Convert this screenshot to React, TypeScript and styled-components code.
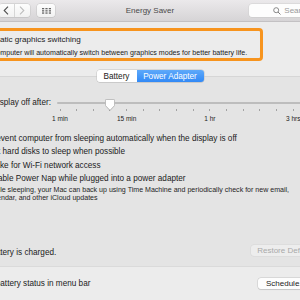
import React from "react";
import styled, { createGlobalStyle } from "styled-components";

const GlobalStyle = createGlobalStyle`
  html, body { margin: 0; padding: 0; background: #ececec; }
  body {
    width: 300px; height: 300px; overflow: hidden;
    font-family: "Liberation Sans", Arial, sans-serif;
    color: #1b1b1b;
  }
  #root { width: 300px; height: 300px; overflow: hidden; }
`;

const Viewport = styled.div`
  width: 300px;
  height: 300px;
  overflow: hidden;
`;

const Window = styled.div`
  width: 400px;
  height: 300px;
  margin-left: -50px;
  background: #ececec;
  display: flex;
  flex-direction: column;
`;

const Toolbar = styled.header`
  height: 21px;
  flex: none;
  border-bottom: 1px solid #c3c1c3;
  background: linear-gradient(#ebe9eb, #d6d4d6);
  display: grid;
  grid-template-columns: 1fr auto 1fr;
  align-items: center;
`;

const LeftTools = styled.div`
  display: flex;
  align-items: center;
  gap: 7px;
  padding-left: 49px;
`;

const NavSegment = styled.div`
  display: flex;
  height: 13px;
  border-radius: 3px;
  background: linear-gradient(#fdfdfd, #f2f2f2);
  box-shadow: 0 0 0 0.5px #c4c4c4, 0 0.5px 0.5px rgba(0, 0, 0, 0.12);
  overflow: hidden;
`;

const NavButton = styled.div<{ $divider?: boolean }>`
  width: 15.5px;
  height: 13px;
  display: flex;
  align-items: center;
  justify-content: center;
  border-right: ${(p) => (p.$divider ? "1px solid #d6d6d6" : "none")};
  box-sizing: border-box;
`;

const ToolButton = styled.div`
  width: 18px;
  height: 13px;
  border-radius: 3px;
  background: linear-gradient(#fdfdfd, #f2f2f2);
  box-shadow: 0 0 0 0.5px #c4c4c4, 0 0.5px 0.5px rgba(0, 0, 0, 0.12);
  display: flex;
  align-items: center;
  justify-content: center;
`;

const Title = styled.div`
  font-size: 8px;
  color: #4a4a4a;
  line-height: 21px;
  white-space: nowrap;
`;

const SearchField = styled.div`
  justify-self: end;
  margin-right: 16px;
  width: 85px;
  height: 13px;
  border-radius: 3px;
  background: #fdfdfd;
  box-shadow: 0 0 0 0.5px #cfcfcf, 0 0.5px 0.5px rgba(0, 0, 0, 0.08);
  display: flex;
  align-items: center;
  justify-content: center;
  gap: 3px;
  font-size: 8px;
  color: #9a9a9a;
`;

const Content = styled.main`
  flex: 1;
  display: flex;
  flex-direction: column;
  padding-top: 6px;
`;

const Callout = styled.section`
  width: 313px;
  height: 33px;
  box-sizing: border-box;
  border: 3px solid #f7941e;
  border-radius: 4px;
  padding: 3px 0 0 23.5px;
  display: flex;
  flex-direction: column;
`;

const CalloutTitle = styled.div`
  font-size: 8.1px;
  line-height: 12px;
  white-space: nowrap;
`;

const CalloutDesc = styled.div`
  font-size: 7.1px;
  line-height: 10px;
  margin-top: 2px;
  white-space: nowrap;
`;

const Panel = styled.section`
  margin-top: 15px;
  height: 191px;
  box-sizing: border-box;
  border-top: 1px solid #d6d6d6;
  border-bottom: 1px solid #dadada;
  background: #e4e4e4;
  display: flex;
  flex-direction: column;
  padding-bottom: 8px;
`;

const Segmented = styled.div`
  align-self: center;
  margin-top: -7px;
  height: 12px;
  box-sizing: border-box;
  display: flex;
  border-radius: 3px;
  overflow: hidden;
  box-shadow: 0 0 0 0.5px #c2c2c2, 0 0.5px 0.5px rgba(0, 0, 0, 0.15);
`;

const Segment = styled.div<{ $active?: boolean; $w: number }>`
  width: ${(p) => p.$w}px;
  height: 12px;
  display: flex;
  align-items: center;
  justify-content: center;
  font-size: 8.2px;
  white-space: nowrap;
  color: ${(p) => (p.$active ? "#ffffff" : "#1b1b1b")};
  background: ${(p) =>
    p.$active ? "linear-gradient(#5ea9fa, #3189f6)" : "#ffffff"};
`;

const SliderRow = styled.div`
  margin-top: 14px;
  display: flex;
  align-items: flex-start;
  padding-left: 24.5px;
`;

const SliderLabel = styled.div`
  width: 77.2px;
  flex: none;
  font-size: 8.2px;
  line-height: 14px;
  white-space: nowrap;
`;

const SliderBox = styled.div`
  position: relative;
  flex: 1;
  height: 27px;
  display: flex;
  flex-direction: column;
`;

const Track = styled.div`
  margin-top: 6px;
  margin-left: 5.3px;
  height: 2px;
  border-radius: 1px;
  background: #bdbdbd;
`;

const Ticks = styled.div`
  margin-top: 5px;
  display: flex;
  height: 2px;
`;

const TickCell = styled.div`
  width: 16.667px;
  flex: none;
  display: flex;
  justify-content: center;
  &::after {
    content: "";
    width: 1px;
    height: 2px;
    background: #a3a3a3;
  }
`;

const ScaleLabels = styled.div`
  margin-top: 3px;
  display: flex;
`;

const ScaleLabel = styled.div`
  width: 16.667px;
  flex: none;
  display: flex;
  justify-content: center;
  white-space: nowrap;
  font-size: 6.5px;
  line-height: 9px;
  color: #222;
`;

const Thumb = styled.div`
  position: absolute;
  top: 1px;
  width: 10px;
  height: 12px;
  filter: drop-shadow(0 0.5px 0.6px rgba(0, 0, 0, 0.3));
`;

const CheckList = styled.div`
  margin-top: 8.2px;
  display: flex;
  flex-direction: column;
`;

const CheckRow = styled.label<{ $indent: number }>`
  height: 13.67px;
  display: flex;
  align-items: center;
  gap: 4px;
  padding-left: ${(p) => p.$indent}px;
  font-size: 8.2px;
  white-space: nowrap;
`;

const Box = styled.span`
  width: 10px;
  height: 10px;
  flex: none;
  box-sizing: border-box;
  border-radius: 2px;
  background: #fff;
  border: 1px solid #b5b5b5;
`;

const Desc = styled.div`
  padding-left: 38px;
  font-size: 7.07px;
  line-height: 8.5px;
  white-space: nowrap;
  color: #1f1f1f;
`;

const PanelFooter = styled.div`
  margin-top: auto;
  display: flex;
  align-items: flex-start;
  padding: 0 27px 0 38px;
`;

const Status = styled.div`
  margin-top: 3px;
  font-size: 8.2px;
  line-height: 10px;
  white-space: nowrap;
`;

const PushButton = styled.div<{ $disabled?: boolean; $w: number }>`
  margin-left: auto;
  width: ${(p) => p.$w}px;
  height: 11px;
  border-radius: 3px;
  display: flex;
  align-items: center;
  justify-content: center;
  font-size: 8px;
  white-space: nowrap;
  color: ${(p) => (p.$disabled ? "#a9a9a9" : "#1b1b1b")};
  background: ${(p) => (p.$disabled ? "#ededed" : "#fdfdfd")};
  box-shadow: ${(p) =>
    p.$disabled
      ? "0 0 0 0.5px #d5d5d5"
      : "0 0 0 0.5px #c6c6c6, 0 0.5px 0.8px rgba(0,0,0,0.15)"};
`;

const BottomRow = styled.div`
  margin-top: 11px;
  height: 11px;
  display: flex;
  align-items: center;
  padding: 0 36px 0 9px;
`;

const BottomLabel = styled.label`
  display: flex;
  align-items: center;
  gap: 4px;
  font-size: 8.2px;
  white-space: nowrap;
`;

const TICK_COUNT = 18;
const CELL = 16.667;
const SCALE: Record<number, string> = { 0: "1 min", 4: "15 min", 9: "1 hr", 14: "3 hrs" };
const THUMB_INDEX = 3;

const ChevronLeft = ({ color }: { color: string }) => (
  <svg width="6" height="9" viewBox="0 0 6 9">
    <polyline points="5,0.6 1.2,4.5 5,8.4" fill="none" stroke={color} strokeWidth="1.1" />
  </svg>
);

const ChevronRight = ({ color }: { color: string }) => (
  <svg width="6" height="9" viewBox="0 0 6 9">
    <polyline points="1,0.6 4.8,4.5 1,8.4" fill="none" stroke={color} strokeWidth="1.1" />
  </svg>
);

const GridIcon = () => (
  <svg width="9" height="6" viewBox="0 0 9 6">
    {[0, 1, 2].map((r) =>
      [0, 1, 2].map((c) => (
        <rect key={`${r}-${c}`} x={c * 3.4} y={r * 2.2} width="2.2" height="1.3" fill="#666" />
      ))
    )}
  </svg>
);

const SearchIcon = () => (
  <svg width="8" height="8" viewBox="0 0 8 8">
    <circle cx="3.2" cy="3.2" r="2.5" fill="none" stroke="#7d7d7d" strokeWidth="0.9" />
    <line x1="5" y1="5" x2="7.5" y2="7.5" stroke="#7d7d7d" strokeWidth="1" />
  </svg>
);

const ThumbShape = () => (
  <svg width="10" height="12" viewBox="0 0 10 12">
    <path
      d="M1.5 0.5 H8.5 Q9.5 0.5 9.5 1.5 V6.6 L5 11.3 L0.5 6.6 V1.5 Q0.5 0.5 1.5 0.5 Z"
      fill="#ffffff"
      stroke="#b8b8b8"
      strokeWidth="0.7"
    />
  </svg>
);

export default function App() {
  const cells = Array.from({ length: TICK_COUNT }, (_, i) => i);
  return (
    <Viewport>
      <GlobalStyle />
      <Window>
        <Toolbar>
          <LeftTools>
            <NavSegment>
              <NavButton $divider>
                <ChevronLeft color="#505050" />
              </NavButton>
              <NavButton>
                <ChevronRight color="#bdbdbd" />
              </NavButton>
            </NavSegment>
            <ToolButton>
              <GridIcon />
            </ToolButton>
          </LeftTools>
          <Title>Energy Saver</Title>
          <SearchField>
            <SearchIcon />
            <span>Search</span>
          </SearchField>
        </Toolbar>
        <Content>
          <Callout>
            <CalloutTitle>Automatic graphics switching</CalloutTitle>
            <CalloutDesc>
              Your computer will automatically switch between graphics modes for better battery life.
            </CalloutDesc>
          </Callout>
          <Panel>
            <Segmented>
              <Segment $w={40}>Battery</Segment>
              <Segment $w={67} $active>
                Power Adapter
              </Segment>
            </Segmented>
            <SliderRow>
              <SliderLabel>Turn display off after:</SliderLabel>
              <SliderBox>
                <Track />
                <Ticks>
                  {cells.map((i) => (
                    <TickCell key={i} />
                  ))}
                </Ticks>
                <ScaleLabels>
                  {cells.map((i) => (
                    <ScaleLabel key={i}>{SCALE[i] ?? ""}</ScaleLabel>
                  ))}
                </ScaleLabels>
                <Thumb style={{ left: THUMB_INDEX * CELL + CELL / 2 - 5 }}>
                  <ThumbShape />
                </Thumb>
              </SliderBox>
            </SliderRow>
            <CheckList>
              <CheckRow $indent={24}>
                <Box />
                Prevent computer from sleeping automatically when the display is off
              </CheckRow>
              <CheckRow $indent={24}>
                <Box />
                Put hard disks to sleep when possible
              </CheckRow>
              <CheckRow $indent={24}>
                <Box />
                Wake for Wi-Fi network access
              </CheckRow>
              <CheckRow $indent={24}>
                <Box />
                Enable Power Nap while plugged into a power adapter
              </CheckRow>
              <Desc>
                While sleeping, your Mac can back up using Time Machine and periodically check for new email,
                <br />
                calendar, and other iCloud updates
              </Desc>
            </CheckList>
            <PanelFooter>
              <Status>Battery is charged.</Status>
              <PushButton $disabled $w={72}>
                Restore Defaults
              </PushButton>
            </PanelFooter>
          </Panel>
          <BottomRow>
            <BottomLabel>
              <Box />
              Show battery status in menu bar
            </BottomLabel>
            <PushButton $w={56}>Schedule...</PushButton>
          </BottomRow>
        </Content>
      </Window>
    </Viewport>
  );
}
